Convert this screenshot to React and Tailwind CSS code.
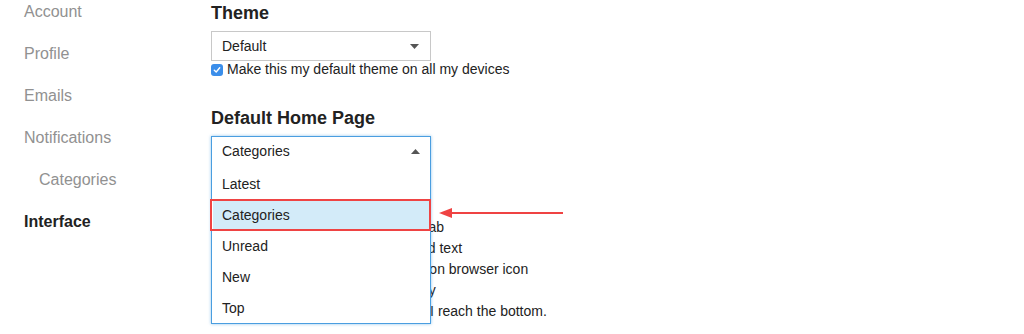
import React from 'react';

const sideItems = [
  { label: 'Account' },
  { label: 'Profile' },
  { label: 'Emails' },
  { label: 'Notifications' },
  { label: 'Categories', sub: true },
  { label: 'Interface', active: true },
];

const homeOptions = ['Latest', 'Categories', 'Unread', 'New', 'Top'];

const otherPrefs = [
  'Open all external links in a new tab',
  'Enable quote reply for highlighted text',
  'Show new / updated topic count on browser icon',
  "Don't jump to my post after I reply",
  'Automatically unpin topics when I reach the bottom.',
];

const Caret = ({ up = false }) => (
  <svg width="9" height="5" viewBox="0 0 9 5" className="shrink-0">
    {up ? <path d="M0 5 L4.5 0 L9 5 Z" fill="#555" /> : <path d="M0 0 L9 0 L4.5 5 Z" fill="#555" />}
  </svg>
);

const CheckBox = () => (
  <span className="flex h-[12px] w-[12px] shrink-0 items-center justify-center rounded-[3px] bg-[#3b8eea]">
    <svg width="8" height="8" viewBox="0 0 8 8">
      <path d="M1.3 4.2 L3.2 6 L6.7 1.8" stroke="#fff" strokeWidth="1.4" fill="none" strokeLinecap="round" strokeLinejoin="round" />
    </svg>
  </span>
);

export default function App() {
  return (
    <div className="flex h-[334px] w-[1024px] overflow-hidden bg-white font-['Liberation_Sans',Arial,sans-serif] text-[#222]">
      {/* sidebar */}
      <nav className="flex w-[211px] shrink-0 flex-col gap-[20px] pl-[24px] pt-[1px]">
        {sideItems.map((item) => (
          <div
            key={item.label}
            className={
              'text-[16px] leading-[22px] ' +
              (item.sub ? 'pl-[15px] ' : '') +
              (item.active ? 'font-bold text-[#222]' : 'text-[#919191]')
            }
          >
            {item.label}
          </div>
        ))}
      </nav>

      {/* main */}
      <main className="flex flex-col pt-[2px]">
        <h2 className="text-[18px] font-bold leading-[22px]">Theme</h2>
        <div className="mt-[7px] flex h-[30px] w-[220px] items-center justify-between border border-[#c8c8c8] bg-white pl-[10px] pr-[11px] text-[14px]">
          <span>Default</span>
          <Caret />
        </div>
        <label className="flex h-[17px] items-center gap-[4px] text-[14px]">
          <CheckBox />
          <span>Make this my default theme on all my devices</span>
        </label>

        <h2 className="mt-[29px] text-[18px] font-bold leading-[22px]">Default Home Page</h2>

        <div className="relative mt-[7px]">
          <div className="flex h-[30px] w-[220px] items-center justify-between border border-[#c8c8c8] pl-[10px] pr-[11px] text-[14px]">
            <span>Categories</span>
            <Caret />
          </div>
          <div className="mt-[51px] flex flex-col">
            {otherPrefs.map((p) => (
              <label key={p} className="flex h-[21px] items-center gap-[4px] whitespace-nowrap text-[14px]">
                <CheckBox />
                <span>{p}</span>
              </label>
            ))}
          </div>

          {/* open dropdown */}
          <div className="absolute left-0 top-0 flex w-[220px] flex-col border border-[#4a9ee0] bg-white text-[14px] shadow-[0_0_3px_rgba(74,158,224,0.6)]">
            <div className="flex h-[31px] items-center justify-between pb-[2px] pl-[10px] pr-[10px]">
              <span>Categories</span>
              <Caret up />
            </div>
            {homeOptions.map((o) => (
              <div
                key={o}
                className={
                  'mx-[1px] flex h-[31px] items-center pl-[9px] pt-[2px] ' + (o === 'Categories' ? 'bg-[#d3ebf9]' : '')
                }
              >
                {o}
              </div>
            ))}
          </div>

          {/* annotation */}
          <div className="absolute left-[-1px] top-[63px] h-[32px] w-[221px] border-2 border-[#ef4343]" />
          <svg className="absolute left-[228px] top-[69px]" width="126" height="16" viewBox="0 0 126 16">
            <line x1="10" y1="8" x2="124" y2="8" stroke="#ef4343" strokeWidth="2" />
            <path d="M0 8 L13 3 L13 13 Z" fill="#ef4343" />
          </svg>
        </div>
      </main>
    </div>
  );
}
